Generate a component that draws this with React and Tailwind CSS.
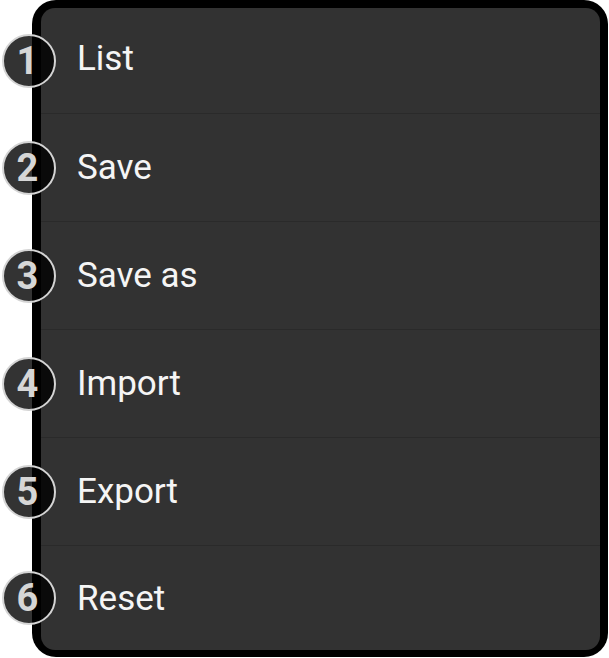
import React from 'react';

const items = ['List', 'Save', 'Save as', 'Import', 'Export', 'Reset'];

const Badge = ({ n }) => (
  <div className="absolute left-[-39px] top-1/2 -translate-y-1/2 w-[54px] h-[54px] rounded-full bg-black/80 border-2 border-[#d4d4d4] flex items-center justify-center">
    <span className="text-[38px] font-bold leading-none text-[#d6d6d6] -ml-[3px]">{n}</span>
  </div>
);

const App = () => {
  return (
    <div className="w-[609px] h-[658px] bg-white" style={{ fontFamily: 'Roboto, "Liberation Sans", sans-serif' }}>
      <div className="ml-[32px] w-[576px] h-[657px] bg-black rounded-[24px] pt-2 pl-[9px] pr-2 pb-[7px]">
        <div className="h-full bg-[#323232] rounded-[14px] flex flex-col">
          {items.map((label, i) => (
            <div
              key={label}
              className={
                i === 0
                  ? 'relative h-[106px] flex items-center pl-[36px] pb-[4px] border-b border-[#2a2a2a]'
                  : i === items.length - 1
                  ? 'relative flex-1 flex items-center pl-[36px]'
                  : 'relative h-[108px] flex items-center pl-[36px] border-b border-[#2a2a2a]'
              }
            >
              <Badge n={i + 1} />
              <span className="text-[35px] text-[#f5f5f5] leading-none">{label}</span>
            </div>
          ))}
        </div>
      </div>
    </div>
  );
};

export default App;
